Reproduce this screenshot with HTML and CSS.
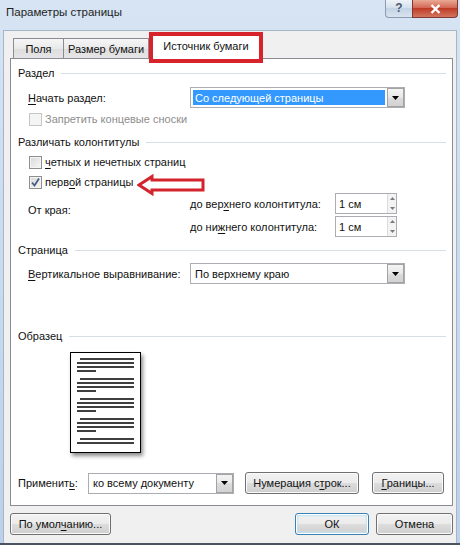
FILE: index.html
```html
<!DOCTYPE html>
<html lang="ru">
<head>
    <meta charset="UTF-8">
    <meta name="viewport" content="width=device-width, initial-scale=1.0">
    <title>Параметры страницы</title>
    <link rel="stylesheet" href="styles.css">
</head>
<body>
    <div class="window">
        <div class="titlebar">
            <span class="title">Параметры страницы</span>
            <div class="caption">
                <span class="btn-help">?</span>
                <span class="btn-close">
                    <svg width="11" height="10" viewBox="0 0 11 10"><path d="M1.5 1 L9.5 9 M9.5 1 L1.5 9" stroke="#fff" stroke-width="2.4"/></svg>
                </span>
            </div>
        </div>

        <div class="dialog">
            <div class="tabs">
                <div class="tab">Поля</div>
                <div class="tab tab-wide">Размер бумаги</div>
                <div class="tab active">Источник бумаги</div>
            </div>

            <div class="panel">
                <div class="legend">Раздел</div>
                <div class="row gap-4">
                    <span class="label"><u>Н</u>ачать раздел:</span>
                    <div class="select">
                        <span class="value hl">Со следующей страницы</span>
                        <span class="drop"><svg width="7" height="4" viewBox="0 0 7 4"><path d="M0 0 H7 L3.5 4 Z" fill="#000"/></svg></span>
                    </div>
                </div>
                <div class="check-row gap-1 disabled">
                    <span class="cb"></span>
                    <span>Запретить концевые сноски</span>
                </div>

                <div class="legend gap-3">Различать колонтитулы</div>
                <div class="check-row">
                    <span class="cb"></span>
                    <span><u>ч</u>етных и нечетных страниц</span>
                </div>
                <div class="check-row arrow-row">
                    <span class="cb">
                        <svg width="11" height="11" viewBox="0 0 11 11"><path d="M2 5.5 L4.5 8.5 L9 1.5" fill="none" stroke="#4a5f80" stroke-width="1.8"/></svg>
                    </span>
                    <span>перв<u>о</u>й страницы</span>
                    <!-- стрелка-пометка поверх диалога -->
                    <svg class="mark" width="68" height="22" viewBox="0 0 68 22">
                        <path d="M2 11 L15 2.5 L15 6 L66 6 L66 16 L15 16 L15 19.5 Z" fill="#fff" stroke="#d4232c" stroke-width="3" stroke-linejoin="miter"/>
                    </svg>
                </div>

                <div class="spin-group">
                    <span class="side">От края:</span>
                    <div class="spin-rows">
                        <div class="spin-row">
                            <span class="label2">до вер<u>х</u>него колонтитула:</span>
                            <div class="spin">
                                <span class="num">1 см</span>
                                <span class="arrows">
                                    <span><svg width="5" height="3" viewBox="0 0 5 3"><path d="M0 3 L2.5 0 L5 3 Z" fill="#7a7a7a"/></svg></span>
                                    <span><svg width="5" height="3" viewBox="0 0 5 3"><path d="M0 0 L2.5 3 L5 0 Z" fill="#7a7a7a"/></svg></span>
                                </span>
                            </div>
                        </div>
                        <div class="spin-row">
                            <span class="label2">до ни<u>ж</u>него колонтитула:</span>
                            <div class="spin">
                                <span class="num">1 см</span>
                                <span class="arrows">
                                    <span><svg width="5" height="3" viewBox="0 0 5 3"><path d="M0 3 L2.5 0 L5 3 Z" fill="#7a7a7a"/></svg></span>
                                    <span><svg width="5" height="3" viewBox="0 0 5 3"><path d="M0 0 L2.5 3 L5 0 Z" fill="#7a7a7a"/></svg></span>
                                </span>
                            </div>
                        </div>
                    </div>
                </div>

                <div class="legend gap-3">Страница</div>
                <div class="row gap-3">
                    <span class="label"><u>В</u>ертикальное выравнивание:</span>
                    <div class="select">
                        <span class="value">По верхнему краю</span>
                        <span class="drop"><svg width="7" height="4" viewBox="0 0 7 4"><path d="M0 0 H7 L3.5 4 Z" fill="#000"/></svg></span>
                    </div>
                </div>

                <div class="legend sample-title">Образец</div>
                <div class="sample">
                    <svg width="71" height="101" viewBox="0 0 71 101">
                        <rect x="0.5" y="0.5" width="70" height="100" fill="#fff" stroke="#000"/>
                        <g stroke="#000" stroke-width="1.4">
                            <path d="M10 7 H64 M7 11 H64 M7 15 H64 M7 19 H26"/>
                            <path d="M10 27 H64 M7 31 H64 M7 35 H64 M7 39 H26"/>
                            <path d="M10 47 H64 M7 51 H64 M7 55 H64 M7 59 H26"/>
                            <path d="M10 67 H64 M7 71 H64 M7 75 H64 M7 79 H26"/>
                            <path d="M10 87 H64 M7 91 H64"/>
                        </g>
                    </svg>
                </div>

                <div class="apply">
                    <span class="apply-label">Применит<u>ь</u>:</span>
                    <div class="select small">
                        <span class="value">ко всему документу</span>
                        <span class="drop"><svg width="7" height="4" viewBox="0 0 7 4"><path d="M0 0 H7 L3.5 4 Z" fill="#000"/></svg></span>
                    </div>
                    <button class="btn btn-lines">Нумерация с<u>т</u>рок...</button>
                    <button class="btn btn-borders"><u>Г</u>раницы...</button>
                </div>
            </div>

            <div class="footer">
                <button class="btn btn-default">По умол<u>ч</u>анию...</button>
                <button class="btn btn-ok">ОК</button>
                <button class="btn btn-cancel">Отмена</button>
            </div>
        </div>
    </div>
</body>
</html>
```

FILE: styles.css
```css
* {
    box-sizing: border-box;
}
body {
    margin: 0;
    font-family: "Liberation Sans", Arial, sans-serif;
    font-size: 11px;
    color: #111;
    white-space: nowrap;
}
u {
    text-decoration-thickness: 1px;
    text-underline-offset: 2px;
}
.window {
    width: 460px;
    height: 545px;
    display: flex;
    flex-direction: column;
    background: linear-gradient(#d6e4f3, #bcd1e9);
    border-bottom: 2px solid #4a5360;
}
.titlebar {
    height: 30px;
    flex: none;
    display: flex;
    align-items: flex-start;
    padding-left: 6px;
}
.title {
    padding-top: 6px;
    font-size: 11.5px;
    color: #1e1e1e;
}
.caption {
    display: flex;
    margin-left: auto;
    margin-right: 2px;
}
.btn-help {
    width: 27px;
    height: 18px;
    border: 1px solid #8c9bb0;
    border-top: none;
    border-right: none;
    border-radius: 0 0 0 4px;
    background: linear-gradient(#eef3f9, #d3deeb 50%, #c4d3e5 50%, #d8e3ef);
    color: #4b5a70;
    font-size: 12px;
    font-weight: bold;
    text-align: center;
    line-height: 17px;
}
.btn-close {
    width: 46px;
    height: 18px;
    border: 1px solid #7d3a32;
    border-top: none;
    border-radius: 0 0 4px 0;
    background: linear-gradient(#e9a996, #d0614e 50%, #be3c27 50%, #d3755f);
    display: flex;
    align-items: center;
    justify-content: center;
}
.dialog {
    flex: 1;
    margin: 0 3px;
    background: #f0f0f0;
    border: 1px solid #a4b6ca;
    border-bottom: none;
    padding: 2px 3px 0 6px;
    display: flex;
    flex-direction: column;
}

/* вкладки */
.tabs {
    display: flex;
    align-items: flex-end;
    height: 26px;
    margin-left: 3px;
    margin-bottom: -1px;
}
.tab {
    width: 51px;
    height: 21px;
    border: 1px solid #898c95;
    border-bottom: none;
    background: linear-gradient(#f6f6f6, #e8e8e8 50%, #dedede 50%, #e6e6e6);
    display: flex;
    align-items: center;
    justify-content: center;
    padding-bottom: 1px;
}
.tab-wide {
    width: 86px;
    margin-left: -1px;
}
.tab.active {
    width: 112px;
    height: 26px;
    margin-left: 1px;
    background: #fff;
    position: relative;
    z-index: 2;
    padding-bottom: 2px;
}
.tab.active::after {
    content: "";
    position: absolute;
    top: -2px;
    left: -2px;
    right: -2px;
    bottom: -4px;
    border: 4px solid #d8222c;
}

/* содержимое вкладки */
.panel {
    height: 448px;
    flex: none;
    border: 1px solid #898c95;
    background: #fff;
    padding: 4px 6px 0 7px;
    position: relative;
    z-index: 1;
}
.legend {
    display: flex;
    align-items: center;
    height: 20px;
}
.legend::after {
    content: "";
    flex: 1;
    height: 1px;
    margin-left: 7px;
    background: #d5dfe5;
}
.gap-1 { margin-top: 1px; }
.gap-3 { margin-top: 3px; }
.gap-4 { margin-top: 4px; }

.row {
    display: flex;
    align-items: center;
    height: 21px;
}
.label {
    width: 162px;
    margin-left: 10px;
}
.select {
    width: 215px;
    height: 21px;
    border: 1px solid #abadb3;
    background: #fff;
    display: flex;
}
.select .value {
    flex: 1;
    display: flex;
    align-items: center;
    padding-left: 2px;
    margin: 2px;
}
.select .value.hl {
    background: #3399ff;
    color: #fff;
}
.select .drop {
    width: 17px;
    border: 1px solid #a3a3a3;
    background: linear-gradient(#f4f4f4, #e8e8e8 50%, #dcdcdc 50%, #d2d2d2);
    display: flex;
    align-items: center;
    justify-content: center;
}

.check-row {
    display: flex;
    align-items: center;
    height: 20px;
}
.cb {
    width: 13px;
    height: 13px;
    margin-left: 11px;
    margin-right: 3px;
    border: 1px solid #8e8f8f;
    background: linear-gradient(135deg, #d8d8d8, #f7f7f7);
    box-shadow: inset 0 0 0 1px #f4f4f4;
    display: flex;
    align-items: center;
    justify-content: center;
}
.disabled {
    color: #8d8d8d;
}
.disabled .cb {
    border-color: #c6c6c6;
    background: #f4f4f4;
}
.arrow-row {
    position: relative;
}
.mark {
    position: absolute;
    left: 119px;
    top: 2px;
}

.spin-group {
    display: flex;
    margin-top: 1px;
}
.side {
    width: 162px;
    margin-left: 10px;
    padding-top: 11px;
}
.spin-rows {
    display: flex;
    flex-direction: column;
    gap: 2px;
}
.spin-row {
    display: flex;
    align-items: center;
    height: 21px;
}
.label2 {
    width: 145px;
}
.spin {
    width: 62px;
    height: 21px;
    border: 1px solid #abadb3;
    background: #fff;
    display: flex;
    align-items: center;
    padding-left: 3px;
}
.spin .num {
    flex: 1;
}
.spin .arrows {
    width: 9px;
    height: 100%;
    display: flex;
    flex-direction: column;
    border-left: 1px solid #dcdcdc;
}
.spin .arrows span {
    flex: 1;
    display: flex;
    align-items: center;
    justify-content: center;
    background: #f3f3f3;
}

.sample-title {
    margin-top: 42px;
}
.sample {
    width: 71px;
    height: 101px;
    margin: 6px 0 0 52px;
    box-shadow: 2px 3px 4px rgba(0, 0, 0, 0.45);
}
.sample svg {
    display: block;
}

.apply {
    display: flex;
    align-items: center;
    height: 22px;
    margin-top: 19px;
}
.apply-label {
    width: 70px;
}
.select.small {
    width: 146px;
}
.btn {
    height: 22px;
    padding: 0;
    font-family: inherit;
    font-size: 11px;
    color: #111;
    border: 1px solid #707070;
    border-radius: 3px;
    background: linear-gradient(#f2f2f2, #ebebeb 50%, #dddddd 50%, #cfcfcf);
    box-shadow: inset 0 0 0 1px #fbfbfb;
}
.btn-lines {
    width: 114px;
    margin-left: 11px;
}
.btn-borders {
    width: 72px;
    margin-left: 13px;
}

.footer {
    display: flex;
    margin-top: 7px;
}
.btn-default {
    width: 101px;
}
.btn-ok {
    width: 74px;
    margin-left: auto;
    border-color: #3c7fb1;
    box-shadow: inset 0 0 0 1px #fff, inset 0 0 2px 2px #bfe3f6;
}
.btn-cancel {
    width: 77px;
    margin-left: 7px;
}
```
